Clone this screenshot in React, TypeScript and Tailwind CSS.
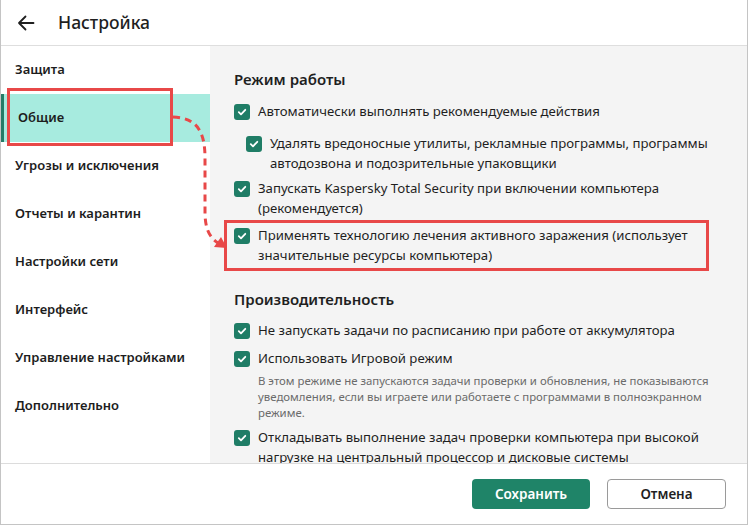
import React from "react";

const font = { fontFamily: '"Noto Sans", "Open Sans", sans-serif' };

function Check({ className = "" }: { className?: string }) {
  return (
    <div className={"w-[16px] h-[16px] rounded-[3px] bg-[#1f7d66] flex items-center justify-center shrink-0 " + className}>
      <svg width="10" height="10" viewBox="0 0 10 10">
        <path d="M1.8 5.2 L4 7.3 L8.3 2.8" fill="none" stroke="white" strokeWidth="1.8" strokeLinecap="round" strokeLinejoin="round" />
      </svg>
    </div>
  );
}

function Item({ lines, mt, nested = false }: { lines: string[]; mt: string; nested?: boolean }) {
  return (
    <div className={"flex " + mt + (nested ? " ml-[12px]" : "")}>
      <Check className="mt-[3px]" />
      <div className="ml-[8px] text-[13.2px] leading-[20px] text-[#1f1f1f]">
        {lines.map((l, i) => (
          <div key={i} className="whitespace-nowrap">{l}</div>
        ))}
      </div>
    </div>
  );
}

const nav = [
  "Защита",
  "Общие",
  "Угрозы и исключения",
  "Отчеты и карантин",
  "Настройки сети",
  "Интерфейс",
  "Управление настройками",
  "Дополнительно",
];

export default function App() {
  return (
    <div className="relative w-[750px] h-[525px] bg-white overflow-hidden" style={font}>
      <div className="w-[748px] h-[525px] border-l border-r border-b border-[#c4c4c4] flex flex-col">
        <div className="h-[46px] shrink-0 border-b border-[#dedede] flex items-center">
          <svg className="ml-[16px]" width="18" height="18" viewBox="0 0 18 18">
            <path d="M16.5 9 H2 M8.5 2.5 L2 9 L8.5 15.5" fill="none" stroke="#1f1f1f" strokeWidth="1.8" strokeLinecap="round" strokeLinejoin="round" />
          </svg>
          <div className="ml-[23px] text-[17.5px] font-medium text-[#1f1f1f] leading-[24px] -mt-[2px]">Настройка</div>
        </div>
        <div className="flex flex-1 min-h-0">
          <div className="w-[209px] shrink-0 bg-white flex flex-col">
            {nav.map((n, i) => (
              <div
                key={n}
                className={
                  "h-[48px] shrink-0 flex items-center pl-[14px] text-[13px] font-semibold text-[#1d1d1d] whitespace-nowrap " +
                  (i === 1 ? "bg-[#a7ebdf] border-l-[3px] border-[#257a66] pl-[11px]" : "")
                }
              >
                {n}
              </div>
            ))}
          </div>
          <div className="flex-1 bg-[#f4f4f4] pl-[24px] pt-[22px] overflow-hidden">
            <div className="text-[15px] leading-[22px] font-semibold text-[#1f1f1f]">Режим работы</div>
            <Item mt="mt-[11px]" lines={["Автоматически выполнять рекомендуемые действия"]} />
            <Item
              nested
              mt="mt-[12px]"
              lines={["Удалять вредоносные утилиты, рекламные программы, программы", "автодозвона и подозрительные упаковщики"]}
            />
            <Item mt="mt-[5px]" lines={["Запускать Kaspersky Total Security при включении компьютера", "(рекомендуется)"]} />
            <Item
              mt="mt-[7px]"
              lines={["Применять технологию лечения активного заражения (использует", "значительные ресурсы компьютера)"]}
            />
            <div className="mt-[23px] text-[15px] leading-[22px] font-semibold text-[#1f1f1f]">Производительность</div>
            <Item mt="mt-[10px]" lines={["Не запускать задачи по расписанию при работе от аккумулятора"]} />
            <Item mt="mt-[8px]" lines={["Использовать Игровой режим"]} />
            <div className="ml-[24px] mt-[5px] text-[11.4px] leading-[16px] text-[#6b6b6b]">
              <div className="whitespace-nowrap">В этом режиме не запускаются задачи проверки и обновления, не показываются</div>
              <div className="whitespace-nowrap">уведомления, если вы играете или работаете с программами в полноэкранном</div>
              <div className="whitespace-nowrap">режиме.</div>
            </div>
            <Item
              mt="mt-[6px]"
              lines={["Откладывать выполнение задач проверки компьютера при высокой", "нагрузке на центральный процессор и дисковые системы"]}
            />
          </div>
        </div>
        <div className="h-[61px] shrink-0 border-t border-[#dcdcdc] bg-white flex items-center justify-end pr-[21px] gap-[17px]">
          <button className="w-[118px] h-[30px] rounded-[4px] bg-[#1f8468] text-white text-[13.5px] font-semibold">Сохранить</button>
          <button className="w-[119px] h-[30px] rounded-[4px] bg-white border border-[#9a9a9a] text-[#1f1f1f] text-[13.5px] font-semibold">Отмена</button>
        </div>
      </div>

      <div className="absolute left-[7px] top-[88px] w-[166px] h-[58px] border-[3px] border-[#e84848]" />
      <div className="absolute left-[224px] top-[220px] w-[485px] h-[51px] border-[3px] border-[#e84848]" />
      <svg className="absolute left-0 top-0 pointer-events-none" width="750" height="525">
        <path
          d="M173 117 C196 118 205 130 205 158 L205 212 C205 228 209 237 218 243"
          fill="none"
          stroke="#e84848"
          strokeWidth="3"
          strokeDasharray="7 5"
        />
        <path d="M227 248 L214 247 L221 237 Z" fill="#e84848" />
      </svg>
    </div>
  );
}
